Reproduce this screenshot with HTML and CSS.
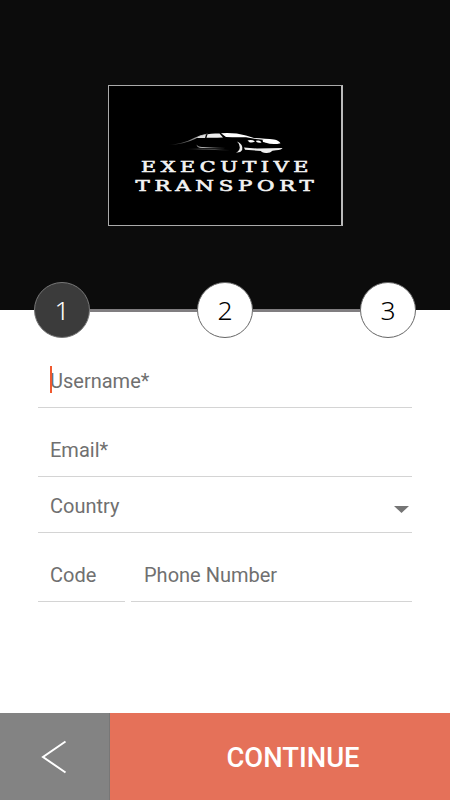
FILE: index.html
```html
<!DOCTYPE html>
<html lang="en">

<head>
    <meta charset="UTF-8">
    <meta name="viewport" content="width=device-width, initial-scale=1.0">
    <title>Executive Transport</title>
    <link rel="stylesheet" href="styles.css">
</head>

<body>
    <!-- Header -->
    <header class="header">
        <div class="logo">
            <svg width="232" height="139" viewBox="109 86 232 139">
                <defs>
                    <linearGradient id="fadeLeft">
                        <stop offset="0" stop-color="#fff" stop-opacity="0" />
                        <stop offset="1" stop-color="#fff" stop-opacity="0.85" />
                    </linearGradient>
                    <linearGradient id="fadeRight">
                        <stop offset="0" stop-color="#fff" stop-opacity="0.9" />
                        <stop offset="1" stop-color="#fff" stop-opacity="0.05" />
                    </linearGradient>
                    <linearGradient id="fadeBoth">
                        <stop offset="0" stop-color="#fff" stop-opacity="0" />
                        <stop offset="0.4" stop-color="#fff" stop-opacity="0.5" />
                        <stop offset="1" stop-color="#fff" stop-opacity="0" />
                    </linearGradient>
                </defs>
                <!-- Car -->
                <path d="M168 145Q184 143.500 194 138Q200 134.500 208 133.400L206 134.600Q200 136 195 139Q184 144.500 168 145Z" fill="url(#fadeLeft)" />
                <path d="M196.500 138Q200 135 206 134.500L205 138Q200 138 196.500 138Z" fill="#ddd" />
                <path d="M207.500 134.200Q213 133 219.500 133.600L223 137.600Q214 138 206.500 137.800Z" fill="#eee" />
                <path d="M221 133.300Q234 132.300 246 135.500L254 138Q266 138.500 274 139.500Q279 140.500 280.500 143.200Q273 145.200 265 142.500L263.500 139.800L256 138.900L246 137.300Q235 137.500 226 137.100Z" fill="#fff" />
                <path d="M247.500 140.500Q252 139.300 255 141.500Q252 143.200 249.500 142.300ZM256 140.800Q260 139.500 261.500 142.500Q258.500 143.300 256.500 142ZM262.500 139.500Q265.500 139.700 265.500 142.500L263 142Z" fill="#fff" />
                <path d="M196.500 144.500Q197.500 147 202 147L225 147.700L224 148.500L203 148.100Q197 148 196.500 144.500Z" fill="url(#fadeRight)" />
                <path d="M184 149.100Q205 147.900 230 150L229 150.800Q207 149.300 184 149.100Z" fill="url(#fadeBoth)" />
                <path d="M237 141.500Q243.500 144 242.200 150Q240.500 153 236 152.500Q239.500 151 239.800 147.500Q240 144 237 141.500Z" fill="#eee" />
                <path d="M244 147.600L257 148.500L282.500 148Q282 149.800 276 150.300L272.500 150.800Q270 153.300 266 153Q261.500 152.500 261 150.900L245 149.800Z" fill="#eee" />
                <!-- Name -->
                <text class="logo-text" x="141" y="171.500" textLength="172" lengthAdjust="spacingAndGlyphs">EXECUTIVE</text>
                <text class="logo-text" x="135.500" y="191" textLength="183" lengthAdjust="spacingAndGlyphs">TRANSPORT</text>
            </svg>
        </div>
    </header>

    <!-- Steps -->
    <div class="steps">
        <div class="step active">1</div>
        <div class="step-line"></div>
        <div class="step">2</div>
        <div class="step-line"></div>
        <div class="step">3</div>
    </div>

    <!-- Sign up form -->
    <form class="form">
        <div class="field">
            <span class="caret"></span>
            <input type="text" placeholder="Username*">
        </div>
        <div class="field">
            <input type="text" placeholder="Email*">
        </div>
        <div class="field country">
            <input type="text" placeholder="Country">
            <svg class="arrow" width="15" height="7" viewBox="0 0 15 7">
                <path d="M0 0H15L7.500 7Z" fill="#757575" />
            </svg>
        </div>
        <div class="phone-row">
            <div class="field code">
                <input type="text" placeholder="Code">
            </div>
            <div class="field phone">
                <input type="text" placeholder="Phone Number">
            </div>
        </div>
    </form>

    <!-- Bottom buttons -->
    <div class="actions">
        <button class="btn-back" aria-label="Back">
            <svg width="26" height="34" viewBox="0 0 26 34">
                <path d="M24.500 1.500L2 17L24.500 32.500" fill="none" stroke="#fff" stroke-width="2" />
            </svg>
        </button>
        <button class="btn-continue">CONTINUE</button>
    </div>
</body>

</html>
```

FILE: styles.css
```css
* {
    margin: 0;
    padding: 0;
    box-sizing: border-box;
}

body {
    display: flex;
    flex-direction: column;
    height: 100vh;
    background: #fff;
    font-family: Roboto, sans-serif;
    overflow: hidden;
}

/* Header */
.header {
    height: 310px;
    padding-top: 85px;
    background: #0c0c0c;
}

.logo {
    width: 235px;
    height: 141px;
    margin: 0 auto;
    background: #000;
    border: 1px solid #aaa;
    border-right: 2px solid #bbb;
}

.logo svg {
    display: block;
}

.logo-text {
    font-family: "DejaVu Serif", serif;
    font-size: 14.4px;
    letter-spacing: 3.2px;
    fill: #f2f2f2;
    stroke: #f2f2f2;
    stroke-width: 0.6px;
}

/* Steps */
.steps {
    display: flex;
    align-items: center;
    height: 56px;
    margin-top: -28px;
    padding: 0 34px;
}

.step {
    width: 56px;
    height: 56px;
    border: 1px solid #666;
    border-radius: 50%;
    background: #fff;
    color: #000;
    font-family: "Noto Sans", "Open Sans", sans-serif;
    font-size: 26.5px;
    font-weight: 300;
    line-height: 54px;
    text-align: center;
}

.step.active {
    background: #3b3b3b;
    border-color: #777;
    color: #fff;
}

.step-line {
    flex: 1;
    height: 3px;
    background: #807e80;
}

/* Form */
.form {
    flex: 1;
    padding: 18px 38px 0;
}

.field {
    position: relative;
    display: flex;
    align-items: center;
    height: 52px;
    margin-bottom: 17px;
    padding: 0 10px 0 12px;
    border-bottom: 1px solid #d4d4d4;
}

.field input {
    flex: 1;
    min-width: 0;
    height: 49px;
    padding-bottom: 1px;
    border: none;
    outline: none;
    background: none;
    color: #333;
    font-family: inherit;
    font-size: 20px;
}

.field input::placeholder {
    color: #707070;
}

.caret {
    position: absolute;
    left: 12px;
    top: 10px;
    width: 2px;
    height: 27px;
    background: #f0592f;
}

.field.country {
    height: 56px;
    margin-top: -17px;
    padding-right: 3px;
}

.country input {
    padding: 2px 0 0;
}

.arrow {
    margin-top: 10px;
}

.phone-row {
    display: flex;
    gap: 6px;
}

.code {
    width: 87px;
}

.phone {
    flex: 1;
    padding-left: 13px;
}

/* Bottom buttons */
.actions {
    display: flex;
    height: 87px;
}

.actions button {
    border: none;
    color: #fff;
    font-family: inherit;
}

.btn-back {
    width: 110px;
    padding: 4px 2px 0 0;
    background: #838383;
}

.actions .btn-back {
    border-right: 1px solid #777;
}

.btn-continue {
    flex: 1;
    padding: 3px 0 0 26px;
    background: #e57159;
    font-size: 27.4px;
    font-weight: 500;
}
```
